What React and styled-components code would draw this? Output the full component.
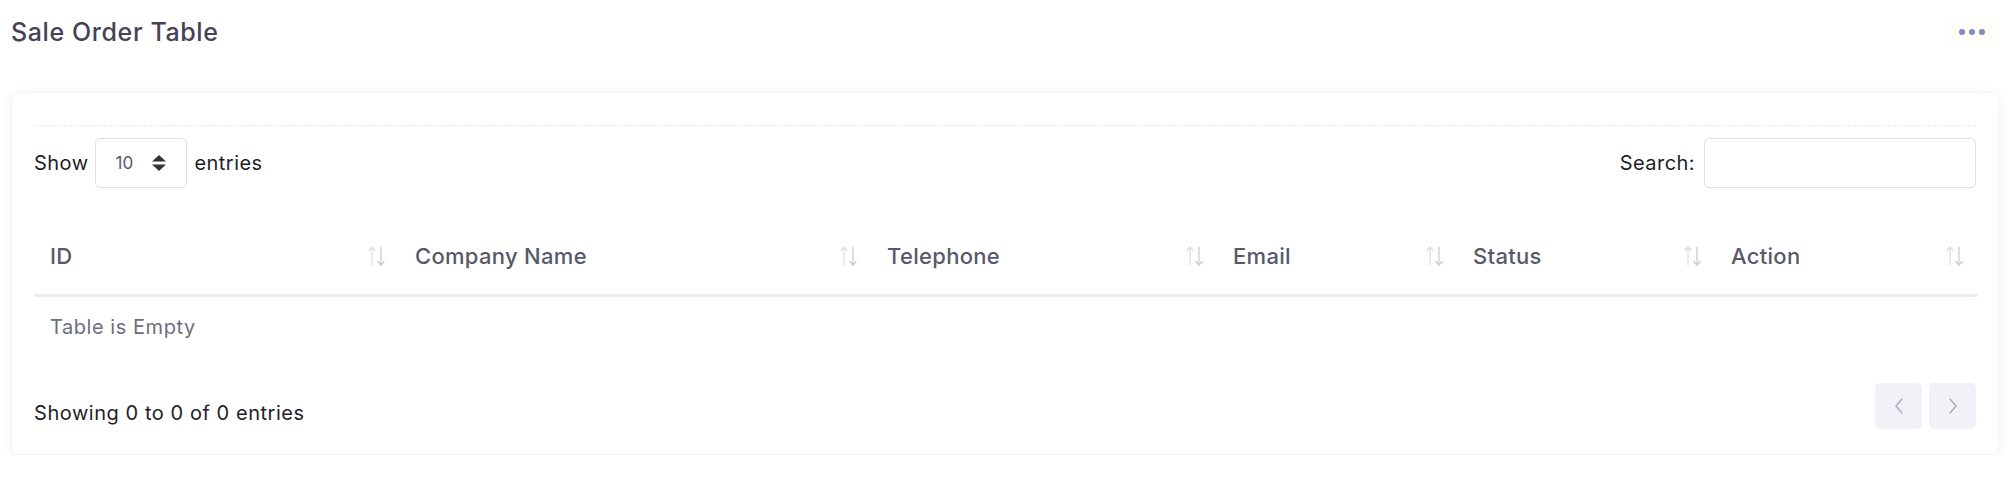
import React from "react";
import styled, { createGlobalStyle } from "styled-components";

const GlobalStyle = createGlobalStyle`
  body {
    margin: 0;
    background: #ffffff;
    font-family: 'Inter', 'Liberation Sans', sans-serif;
  }
`;

const Page = styled("div")`
  padding: 0 12px 0 11px;
`;

const TitleBar = styled("div")`
  display: flex;
  justify-content: space-between;
  align-items: center;
  height: 63px;
  margin-bottom: 29px;
`;

const Title = styled("h4")`
  margin: 0;
  font-size: 25px;
  font-weight: 500;
  color: #454356;
  letter-spacing: 0.6px;
`;

const MoreButton = styled("button")`
  display: flex;
  gap: 4px;
  align-items: center;
  border: none;
  background: #fffefa;
  padding: 13px 10px;
  margin-right: 4px;
  cursor: pointer;
`;

const Dot = styled("span")`
  width: 6px;
  height: 6px;
  border-radius: 50%;
  background: #858ac6;
`;

const Card = styled("div")`
  background: #fff;
  border-radius: 7px;
  border: 1px solid #f4f4f6;
  box-shadow: 0 2px 14px rgba(40, 40, 70, 0.05);
  padding: 0 22px 25px;
`;

const CardHeader = styled("div")`
  height: 32px;
  border-bottom: 1px dashed #e6e6ec;
`;

const Controls = styled("div")`
  display: flex;
  justify-content: space-between;
  align-items: center;
  margin-top: 12px;
`;

const Label = styled("label")`
  display: flex;
  align-items: center;
  gap: ${(p) => p.gap || 7}px;
  font-size: 20px;
  letter-spacing: 0.45px;
  color: #1f1d29;
`;

const SelectBox = styled("div")`
  display: flex;
  align-items: center;
  justify-content: space-between;
  box-sizing: border-box;
  width: 92px;
  height: 50px;
  padding: 0 20px 0 19px;
  border: 1px solid #dedee5;
  border-radius: 5px;
  font-size: 17px;
  letter-spacing: 0;
  color: #575767;
`;

const SearchInput = styled("input")`
  box-sizing: border-box;
  width: 272px;
  height: 50px;
  border: 1px solid #dedee5;
  border-radius: 5px;
  outline: none;
`;

const Table = styled("table")`
  width: 100%;
  margin-top: 30px;
  border-collapse: collapse;
  table-layout: fixed;
`;

const Th = styled("th")`
  box-sizing: border-box;
  width: ${(p) => p.w}px;
  padding: 24px 13px 24px 16px;
  border-bottom: 3px solid #ebebf2;
  text-align: left;
  font-size: 22px;
  font-weight: 500;
  letter-spacing: 0.3px;
  color: #575968;
`;

const HeadInner = styled("div")`
  display: flex;
  justify-content: space-between;
  align-items: center;
  line-height: 28px;
`;

const Td = styled("td")`
  padding: 17px 16px 19px;
  font-size: 20px;
  letter-spacing: 0.55px;
  line-height: 27px;
  color: #6c6e7e;
`;

const Footer = styled("div")`
  display: flex;
  justify-content: space-between;
  align-items: flex-start;
  margin-top: 23px;
`;

const Info = styled("div")`
  padding-top: 17px;
  font-size: 20px;
  letter-spacing: 0.55px;
  line-height: 27px;
  color: #1f1d29;
`;

const Pager = styled("div")`
  display: flex;
  gap: 7px;
`;

const PageButton = styled("button")`
  display: flex;
  align-items: center;
  justify-content: center;
  width: 47px;
  height: 46px;
  border: none;
  border-radius: 5px;
  background: #f1f1f8;
  padding: 0;
`;

const SortIcon = () => (
  <svg width="18" height="20" viewBox="0 0 18 20" fill="none" strokeWidth="1.2" strokeLinecap="round" strokeLinejoin="round">
    <g stroke="#dcdce2">
      <path d="M4 19V1" />
      <path d="M1 4.5L4 1l3 3.5" />
    </g>
    <g stroke="#c6c6ce">
      <path d="M13 1v18" />
      <path d="M10 15.5l3 3.5 3-3.5" />
    </g>
  </svg>
);

const Caret = () => (
  <svg width="14" height="16" viewBox="0 0 14 16">
    <path d="M7 0L14 6.5H0z" fill="#333" />
    <path d="M7 16L0 9.5h14z" fill="#333" />
  </svg>
);

const Chevron = ({ dir }) => (
  <svg width="10" height="16" viewBox="0 0 10 16" fill="none" stroke="#a8a8b8" strokeWidth="1.3" strokeLinecap="round" strokeLinejoin="round">
    <path d={dir === "left" ? "M8 1L2 8l6 7" : "M2 1l6 7-6 7"} />
  </svg>
);

const columns = [
  { label: "ID", w: 365 },
  { label: "Company Name", w: 472 },
  { label: "Telephone", w: 346 },
  { label: "Email", w: 240 },
  { label: "Status", w: 258 },
  { label: "Action", w: 262 },
];

export default function App() {
  return (
    <>
      <GlobalStyle />
      <Page>
        <TitleBar>
          <Title>Sale Order Table</Title>
          <MoreButton aria-label="more">
            <Dot />
            <Dot />
            <Dot />
          </MoreButton>
        </TitleBar>
        <Card>
          <CardHeader />
          <Controls>
            <Label>
              Show
              <SelectBox>
                10
                <Caret />
              </SelectBox>
              entries
            </Label>
            <Label gap={9}>
              Search:
              <SearchInput type="search" />
            </Label>
          </Controls>
          <Table>
            <thead>
              <tr>
                {columns.map((c) => (
                  <Th key={c.label} w={c.w}>
                    <HeadInner>
                      {c.label}
                      <SortIcon />
                    </HeadInner>
                  </Th>
                ))}
              </tr>
            </thead>
            <tbody>
              <tr>
                <Td colSpan={6}>Table is Empty</Td>
              </tr>
            </tbody>
          </Table>
          <Footer>
            <Info>Showing 0 to 0 of 0 entries</Info>
            <Pager>
              <PageButton aria-label="previous">
                <Chevron dir="left" />
              </PageButton>
              <PageButton aria-label="next">
                <Chevron dir="right" />
              </PageButton>
            </Pager>
          </Footer>
        </Card>
      </Page>
    </>
  );
}
